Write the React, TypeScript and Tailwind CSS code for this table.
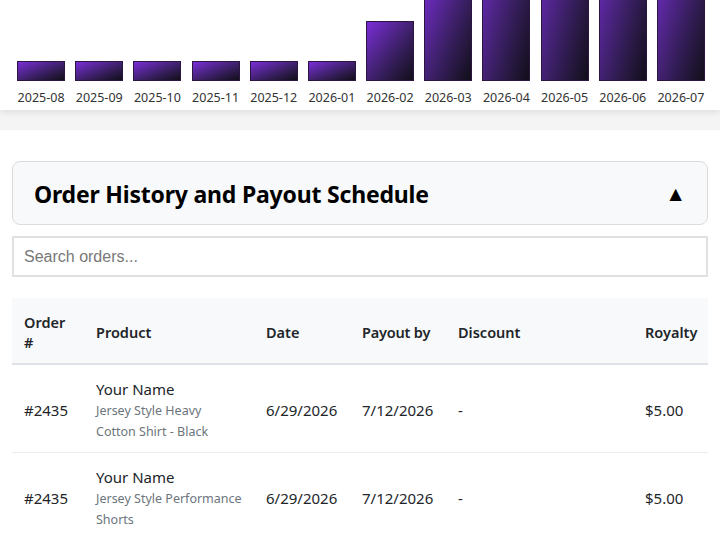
const months = [
  { label: '2025-08', h: 20 },
  { label: '2025-09', h: 20 },
  { label: '2025-10', h: 20 },
  { label: '2025-11', h: 20 },
  { label: '2025-12', h: 20 },
  { label: '2026-01', h: 20 },
  { label: '2026-02', h: 60 },
  { label: '2026-03', h: 110 },
  { label: '2026-04', h: 160 },
  { label: '2026-05', h: 175 },
  { label: '2026-06', h: 165 },
  { label: '2026-07', h: 145 },
]

const orders = [
  { id: '#2435', name: 'Your Name', product: 'Jersey Style Heavy Cotton Shirt - Black', date: '6/29/2026', payout: '7/12/2026', discount: '-', royalty: '$5.00' },
  { id: '#2435', name: 'Your Name', product: 'Jersey Style Performance Shorts', date: '6/29/2026', payout: '7/12/2026', discount: '-', royalty: '$5.00' },
]

export default function App() {
  return (
    <div className="w-[720px] h-[540px] overflow-hidden bg-white text-[#212529] font-['Noto_Sans',sans-serif]">
      {/* Chart card */}
      <div className="bg-white shadow-[0_3px_6px_rgba(0,0,0,0.08)] relative z-10 pl-3 pr-[10px] pb-[3px]">
        <div className="grid grid-cols-12">
          {months.map((m) => (
            <div key={m.label} className="flex justify-center items-end h-[81px] overflow-hidden">
              <div
                className="w-12 border border-[#2a1640] bg-linear-to-br from-[#7b2cd9] to-[#120e1a] shrink-0"
                style={{ height: m.h, minHeight: m.h }}
              />
            </div>
          ))}
        </div>
        <div className="grid grid-cols-12 mt-[8px]">
          {months.map((m) => (
            <div key={m.label} className="text-center text-[12.5px] leading-[18px] text-[#333]">
              {m.label}
            </div>
          ))}
        </div>
      </div>
      <div className="h-5 bg-[#f4f4f4]" />

      <div className="px-3 pt-[31px]">
        {/* Accordion header */}
        <div className="h-[64px] rounded-lg border border-[#dcdcdc] bg-[#f8f9fa] flex items-center justify-between pl-[21px] pr-[21px]">
          <h2 className="text-[23px] font-bold text-black tracking-[-0.2px] pt-[3px]">Order History and Payout Schedule</h2>
          <span className="text-[21px] leading-none text-black">▲</span>
        </div>

        {/* Search */}
        <input
          placeholder="Search orders..."
          className="mt-[11px] w-full h-[41px] border-2 border-[#e0e0e0] px-[10px] text-[16px] font-['Liberation_Sans',Arial,sans-serif] placeholder:text-[#777] outline-none"
        />

        {/* Table */}
        <table className="mt-[21px] w-full table-fixed border-collapse text-[15px]">
          <colgroup>
            <col className="w-[72px]" />
            <col className="w-[170px]" />
            <col className="w-[96px]" />
            <col className="w-[96px]" />
            <col className="w-[187px]" />
            <col />
          </colgroup>
          <thead>
            <tr className="bg-[#f8f9fa] border-b-2 border-[#dee2e6] h-[66px]">
              {['Order #', 'Product', 'Date', 'Payout by', 'Discount', 'Royalty'].map((h) => (
                <th key={h} className="px-3 pt-[3px] text-left font-semibold text-[14.5px] leading-[20px] whitespace-normal">
                  {h === 'Payout by' ? <span className="whitespace-nowrap tracking-[-0.2px]">{h}</span> : h}
                </th>
              ))}
            </tr>
          </thead>
          <tbody>
            {orders.map((o, i) => (
              <tr key={i} className="border-b border-[#eeeeee] h-[87px]">
                <td className="px-3 pt-[3px]">{o.id}</td>
                <td className="px-3 pt-[13px] pb-[10px]">
                  <div className="leading-[22px]">{o.name}</div>
                  <div className="text-[12.5px] leading-[21px] text-[#6c757d]">{o.product}</div>
                </td>
                <td className="px-3 pt-[3px]">{o.date}</td>
                <td className="px-3 pt-[3px]">{o.payout}</td>
                <td className="px-3 pt-[3px]">{o.discount}</td>
                <td className="px-3 pt-[3px]">{o.royalty}</td>
              </tr>
            ))}
          </tbody>
        </table>
      </div>
    </div>
  )
}
